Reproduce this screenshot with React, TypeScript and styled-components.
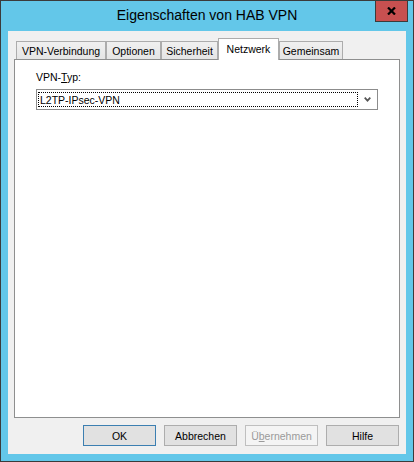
import React from "react";
import styled, { createGlobalStyle } from "styled-components";

const GlobalStyle = createGlobalStyle`
  html, body { margin: 0; padding: 0; background: #ffffff; }
  body { font-family: "Liberation Sans", Arial, sans-serif; }
  * { box-sizing: border-box; }
`;

const FONT = `"Liberation Sans", Arial, sans-serif`;

const Window = styled.div`
  width: 414px;
  height: 462px;
  border: 1px solid #3b3b3b;
  background: #63c7e9;
  display: flex;
  flex-direction: column;
`;

const TitleBar = styled.div`
  height: 30px;
  display: grid;
  grid-template-columns: 1fr auto 1fr;
  align-items: start;
`;

const Title = styled.div`
  grid-column: 2;
  font-family: ${FONT};
  font-size: 14px;
  line-height: 28px;
  color: #000;
  white-space: nowrap;
`;

const CloseButton = styled.div`
  grid-column: 3;
  justify-self: end;
  margin-right: 5px;
  width: 33px;
  height: 21px;
  background: #c75050;
  border: 1px solid #3b3b3b;
  border-top: none;
  display: flex;
  align-items: center;
  justify-content: center;
`;

const Client = styled.div`
  margin: 0 7px 7px;
  height: 423px;
  background: #f0f0f0;
  padding: 7px 6px 0;
  display: flex;
  flex-direction: column;
`;

const TabStrip = styled.div`
  display: flex;
  align-items: flex-end;
  height: 22px;
  padding-left: 2px;
  margin-bottom: -1px;
  position: relative;
  z-index: 1;
`;

const Tab = styled.div<{ $active?: boolean; $w: number }>`
  width: ${(p) => p.$w}px;
  height: ${(p) => (p.$active ? 22 : 18)}px;
  margin-bottom: ${(p) => (p.$active ? 0 : 1)}px;
  padding-bottom: ${(p) => (p.$active ? 2 : 0)}px;
  border: 1px solid #acacac;
  border-bottom: none;
  background: ${(p) =>
    p.$active ? "#ffffff" : "linear-gradient(#f0f0f0, #e5e5e5)"};
  display: flex;
  align-items: center;
  justify-content: center;
  font-family: ${FONT};
  font-size: 10.5px;
  color: #000;
  white-space: nowrap;
`;

const Panel = styled.div`
  height: 359px;
  border: 1px solid #8e8f8f;
  background: #ffffff;
  padding: 11px 21px 0;
  display: flex;
  flex-direction: column;
`;

const FieldLabel = styled.div`
  font-family: ${FONT};
  font-size: 10.5px;
  line-height: 13px;
  color: #000;
`;

const Accel = styled.span`
  text-decoration: underline;
`;

const Combo = styled.div`
  margin-top: 5px;
  height: 21px;
  border: 1px solid #8c8c8c;
  background: #ffffff;
  display: flex;
`;

const FocusBox = styled.div`
  flex: 1;
  margin: 2px 0 2px 1px;
  border: 1px dotted #000;
  padding-left: 1px;
  display: flex;
  align-items: center;
  font-family: ${FONT};
  font-size: 10.5px;
  color: #000;
`;

const ArrowBox = styled.div`
  width: 19px;
  display: flex;
  align-items: center;
  justify-content: center;
`;

const ButtonRow = styled.div`
  display: flex;
  justify-content: flex-end;
  gap: 8px;
  margin-top: 7px;
  padding-right: 1px;
`;

const DlgButton = styled.button<{ $default?: boolean }>`
  width: 73px;
  height: 21px;
  padding: 0;
  margin: 0;
  border: 1px solid ${(p) => (p.$default ? "#3c7fb1" : "#adadad")};
  background: #e1e1e1;
  font-family: ${FONT};
  font-size: 10.5px;
  color: #000;
  &:disabled {
    border-color: #bfbfbf;
    background: #f4f4f4;
    color: #9a9a9a;
  }
`;

const tabs = [
  { label: "VPN-Verbindung", w: 90 },
  { label: "Optionen", w: 55 },
  { label: "Sicherheit", w: 57 },
  { label: "Netzwerk", w: 61, active: true },
  { label: "Gemeinsam", w: 64 },
];

export default function App() {
  return (
    <>
      <GlobalStyle />
      <Window>
        <TitleBar>
          <Title>Eigenschaften von HAB VPN</Title>
          <CloseButton>
            <svg width="9" height="8" viewBox="0 0 9 8">
              <path d="M1 0.5 L8 7.5 M8 0.5 L1 7.5" stroke="#000" strokeWidth="2.2" fill="none" />
            </svg>
          </CloseButton>
        </TitleBar>
        <Client>
          <TabStrip>
            {tabs.map((t) => (
              <Tab key={t.label} $w={t.w} $active={t.active}>
                {t.label}
              </Tab>
            ))}
          </TabStrip>
          <Panel>
            <FieldLabel>
              VPN-<Accel>T</Accel>yp:
            </FieldLabel>
            <Combo>
              <FocusBox>L2TP-IPsec-VPN</FocusBox>
              <ArrowBox>
                <svg width="7" height="5" viewBox="0 0 7 5">
                  <path d="M0.7 0.7 L3.5 3.7 L6.3 0.7" stroke="#555" strokeWidth="1.7" fill="none" />
                </svg>
              </ArrowBox>
            </Combo>
          </Panel>
          <ButtonRow>
            <DlgButton $default>OK</DlgButton>
            <DlgButton>Abbrechen</DlgButton>
            <DlgButton disabled>
              Ü<Accel>b</Accel>ernehmen
            </DlgButton>
            <DlgButton>Hilfe</DlgButton>
          </ButtonRow>
        </Client>
      </Window>
    </>
  );
}
